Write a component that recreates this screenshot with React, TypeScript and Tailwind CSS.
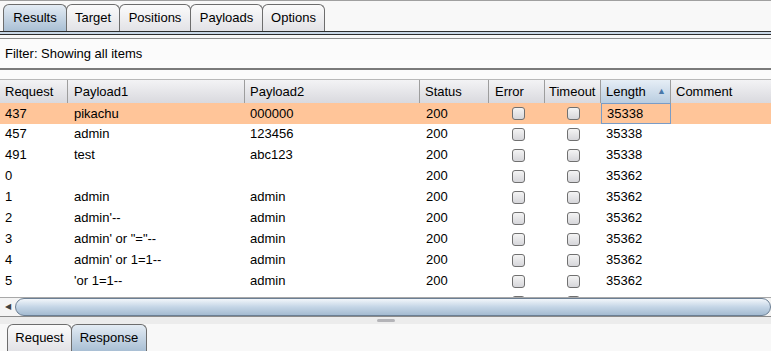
const rows = [
  { req: '437', p1: 'pikachu', p2: '000000', len: '35338', sel: true },
  { req: '457', p1: 'admin', p2: '123456', len: '35338' },
  { req: '491', p1: 'test', p2: 'abc123', len: '35338' },
  { req: '0', p1: '', p2: '', len: '35362' },
  { req: '1', p1: 'admin', p2: 'admin', len: '35362' },
  { req: '2', p1: "admin'--", p2: 'admin', len: '35362' },
  { req: '3', p1: `admin' or "="--`, p2: 'admin', len: '35362' },
  { req: '4', p1: "admin' or 1=1--", p2: 'admin', len: '35362' },
  { req: '5', p1: "'or 1=1--", p2: 'admin', len: '35362' },
  { req: '6', p1: 'admin#', p2: 'admin', len: '35362' },
];

const cols = 'grid grid-cols-[68px_177px_175px_69px_56px_56px_70px_100px]';

function Check() {
  return (
    <span className="block w-[13px] h-[13px] rounded-[3px] border border-[#707070] bg-gradient-to-b from-[#f4f4f4] to-[#d6d6da]" />
  );
}

function Tab({ label, active, w }: { label: string; active?: boolean; w: string }) {
  return (
    <div
      className={`${w} h-[27px] flex items-center justify-center border border-b-0 border-[#6d6d6d] rounded-t-[6px] -ml-px first:ml-0 ${
        active ? 'bg-gradient-to-b from-[#e4ecf4] to-[#a9bfd4]' : 'bg-gradient-to-b from-[#fbfbfb] to-[#e2e2e6]'
      }`}
    >
      {label}
    </div>
  );
}

export default function App() {
  return (
    <div
      className="w-[771px] h-[351px] overflow-hidden bg-[#f8f8f8] text-[13px] text-black flex flex-col"
      style={{ fontFamily: '"Liberation Sans", Arial, sans-serif' }}
    >
      <div className="h-px bg-[#a0a0a0]" />
      {/* top tabs */}
      <div className="flex items-end pl-[3px] h-[30px]">
        <Tab label="Results" active w="w-[64px]" />
        <Tab label="Target" w="w-[54px]" />
        <Tab label="Positions" w="w-[72px]" />
        <Tab label="Payloads" w="w-[73px]" />
        <Tab label="Options" w="w-[63px]" />
      </div>
      <div className="h-px bg-[#2e2e2e]" />
      <div className="h-[2px] bg-[#c9d7e6]" />
      <div className="h-px bg-[#2e2e2e]" />
      <div className="h-[3px]" />
      <div className="h-[2px] bg-[#8a8a8a]" />
      <div className="h-[29px] flex items-center pl-[5px] bg-[#fbfbfb]">Filter: Showing all items</div>
      <div className="h-[2px] bg-[#7a7a7a]" />
      <div className="h-[9px] bg-[#fbfbfb]" />

      {/* header */}
      <div className={`${cols} h-[24px] border-t border-[#b8b8b8] bg-gradient-to-b from-[#f3f3f5] to-[#d9d9de]`}>
        <div className="pl-[5px] flex items-center border-r border-[#9d9d9d]">Request</div>
        <div className="pl-[6px] flex items-center border-r border-[#9d9d9d]">Payload1</div>
        <div className="pl-[5px] flex items-center border-r border-[#9d9d9d]">Payload2</div>
        <div className="pl-[5px] flex items-center border-r border-[#9d9d9d]">Status</div>
        <div className="pl-[6px] flex items-center border-r border-[#9d9d9d]">Error</div>
        <div className="pl-[4px] flex items-center border-r border-[#9d9d9d]">Timeout</div>
        <div className="pl-[5px] pr-[4px] flex items-center justify-between border-r border-[#9d9d9d] bg-gradient-to-b from-[#e6eef6] to-[#b9cde0]">
          <span>Length</span>
          <span className="text-[#4a78a8] text-[9px]">▲</span>
        </div>
        <div className="pl-[5px] flex items-center">Comment</div>
      </div>

      {/* body */}
      <div className="h-[197px] overflow-hidden bg-white">
        {rows.map((r) => (
          <div key={r.req} className={`${cols} h-[21px] ${r.sel ? 'bg-[#ffc599]' : ''}`}>
            <div className="pl-[5px] flex items-center">{r.req}</div>
            <div className="pl-[6px] flex items-center">{r.p1}</div>
            <div className="pl-[5px] flex items-center">{r.p2}</div>
            <div className="pl-[6px] flex items-center">200</div>
            <div className="flex items-center justify-center pl-[3px]"><Check /></div>
            <div className="flex items-center justify-center"><Check /></div>
            <div className={`pl-[5px] flex items-center ${r.sel ? 'border border-[#7a9cc6] pl-[4px]' : ''}`}>{r.len}</div>
            <div />
          </div>
        ))}
      </div>

      {/* scrollbar */}
      <div className="h-[19px] flex bg-[#f4f4f4] border-t border-[#a8a8a8]">
        <div className="w-[15px] flex items-center justify-center text-[#404040] text-[8px]">◀</div>
        <div className="flex-1 rounded-l-[12px] rounded-r-[12px] border border-[#6b7f94] bg-gradient-to-b from-[#f2f6fa] via-[#c4d5e6] to-[#a4bbd1]" />
      </div>
      <div className="h-px bg-[#8a8a8a]" />
      <div className="h-[7px] flex justify-center bg-[#ececec]">
        <div className="w-[18px] h-[3px] mt-[2px] rounded-sm bg-[#b4b4b8]" />
      </div>

      {/* bottom tabs */}
      <div className="flex items-end pl-[7px] flex-1">
        <Tab label="Request" w="w-[65px]" />
        <Tab label="Response" active w="w-[76px]" />
      </div>
    </div>
  );
}
